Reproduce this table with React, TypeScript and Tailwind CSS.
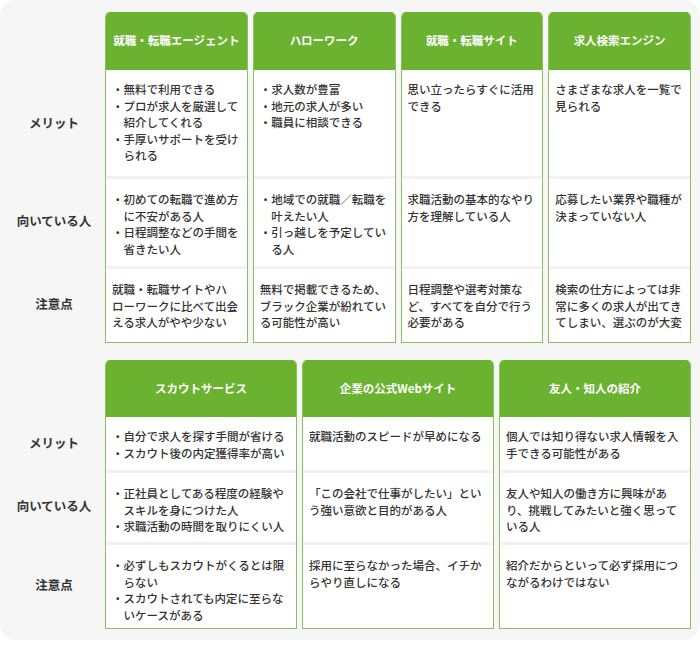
import React from 'react'

type Cell = { bullets?: string[][]; lines?: string[] }

const FONT = { fontFamily: '"Noto Sans CJK JP", "Noto Sans", sans-serif' }

const labels = ['メリット', '向いている人', '注意点']

const topHeaders = ['就職・転職エージェント', 'ハローワーク', '就職・転職サイト', '求人検索エンジン']

const topRows: Cell[][] = [
  [
    { bullets: [['無料で利用できる'], ['プロが求人を厳選して', '紹介してくれる'], ['手厚いサポートを受け', 'られる']] },
    { bullets: [['求人数が豊富'], ['地元の求人が多い'], ['職員に相談できる']] },
    { lines: ['思い立ったらすぐに活用', 'できる'] },
    { lines: ['さまざまな求人を一覧で', '見られる'] },
  ],
  [
    { bullets: [['初めての転職で進め方', 'に不安がある人'], ['日程調整などの手間を', '省きたい人']] },
    { bullets: [['地域での就職／転職を', '叶えたい人'], ['引っ越しを予定してい', 'る人']] },
    { lines: ['求職活動の基本的なやり', '方を理解している人'] },
    { lines: ['応募したい業界や職種が', '決まっていない人'] },
  ],
  [
    { lines: ['就職・転職サイトやハ', 'ローワークに比べて出会', 'える求人がやや少ない'] },
    { lines: ['無料で掲載できるため、', 'ブラック企業が紛れてい', 'る可能性が高い'] },
    { lines: ['日程調整や選考対策な', 'ど、すべてを自分で行う', '必要がある'] },
    { lines: ['検索の仕方によっては非', '常に多くの求人が出てき', 'てしまい、選ぶのが大変'] },
  ],
]

const bottomHeaders = ['スカウトサービス', '企業の公式Webサイト', '友人・知人の紹介']

const bottomRows: Cell[][] = [
  [
    { bullets: [['自分で求人を探す手間が省ける'], ['スカウト後の内定獲得率が高い']] },
    { lines: ['就職活動のスピードが早めになる'] },
    { lines: ['個人では知り得ない求人情報を入', '手できる可能性がある'] },
  ],
  [
    { bullets: [['正社員としてある程度の経験や', 'スキルを身につけた人'], ['求職活動の時間を取りにくい人']] },
    { lines: ['「この会社で仕事がしたい」とい', 'う強い意欲と目的がある人'] },
    { lines: ['友人や知人の働き方に興味があ', 'り、挑戦してみたいと強く思って', 'いる人'] },
  ],
  [
    { bullets: [['必ずしもスカウトがくるとは限', 'らない'], ['スカウトされても内定に至らな', 'いケースがある']] },
    { lines: ['採用に至らなかった場合、イチか', 'らやり直しになる'] },
    { lines: ['紹介だからといって必ず採用につ', 'ながるわけではない'] },
  ],
]

function CellBody({ cell }: { cell: Cell }) {
  if (cell.bullets) {
    return (
      <div>
        {cell.bullets.map((item, i) => (
          <div key={i} className="flex">
            <span className="w-[1em] shrink-0">・</span>
            <div>
              {item.map((l, j) => (
                <div key={j} className="whitespace-nowrap">{l}</div>
              ))}
            </div>
          </div>
        ))}
      </div>
    )
  }
  return (
    <div>
      {cell.lines!.map((l, j) => (
        <div key={j} className="whitespace-nowrap">{l}</div>
      ))}
    </div>
  )
}

function Table({
  headers,
  rows,
  heights,
}: {
  headers: string[]
  rows: Cell[][]
  heights: string[]
}) {
  return (
    <div className="flex">
      <div className="flex w-[105px] shrink-0 flex-col">
        <div className={heights[0]} />
        {labels.map((l, i) => (
          <div
            key={l}
            className={`${heights[i + 1]} flex items-center justify-center pl-[3px] text-[12.5px] font-bold text-[#333]`}
          >
            {l}
          </div>
        ))}
      </div>
      <div className="flex flex-1 gap-[5px]">
        {headers.map((h, c) => (
          <div
            key={h}
            className="flex min-w-0 flex-1 flex-col overflow-hidden rounded-t-[5px] border-[1.5px] border-t-0 border-[#8cbf5f] bg-white"
          >
            <div
              className={`${heights[0]} flex items-center justify-center bg-[#6bb230] text-[11.5px] font-bold text-white`}
            >
              {h}
            </div>
            {rows.map((row, r) => (
              <div
                key={r}
                className={`${heights[r + 1]} px-[6px] text-[11.5px] leading-[16.5px] font-medium text-[#333] ${
                  r === 0 ? 'pt-[11px]' : 'border-t-[3px] border-[#f2f2f2] pt-[12px]'
                }`}
              >
                <CellBody cell={row[c]} />
              </div>
            ))}
          </div>
        ))}
      </div>
    </div>
  )
}

export default function App() {
  return (
    <div className="h-[645px] w-[700px] bg-white" style={FONT}>
      <div className="flex h-[640px] flex-col gap-[17px] rounded-[16px] bg-[#f6f6f6] pt-[12px] pr-[9px]">
        <Table
          headers={topHeaders}
          rows={topRows}
          heights={['h-[58px]', 'h-[106px]', 'h-[90px]', 'h-[76px]']}
        />
        <Table
          headers={bottomHeaders}
          rows={bottomRows}
          heights={['h-[57px]', 'h-[53px]', 'h-[72px]', 'h-[86px]']}
        />
      </div>
    </div>
  )
}
